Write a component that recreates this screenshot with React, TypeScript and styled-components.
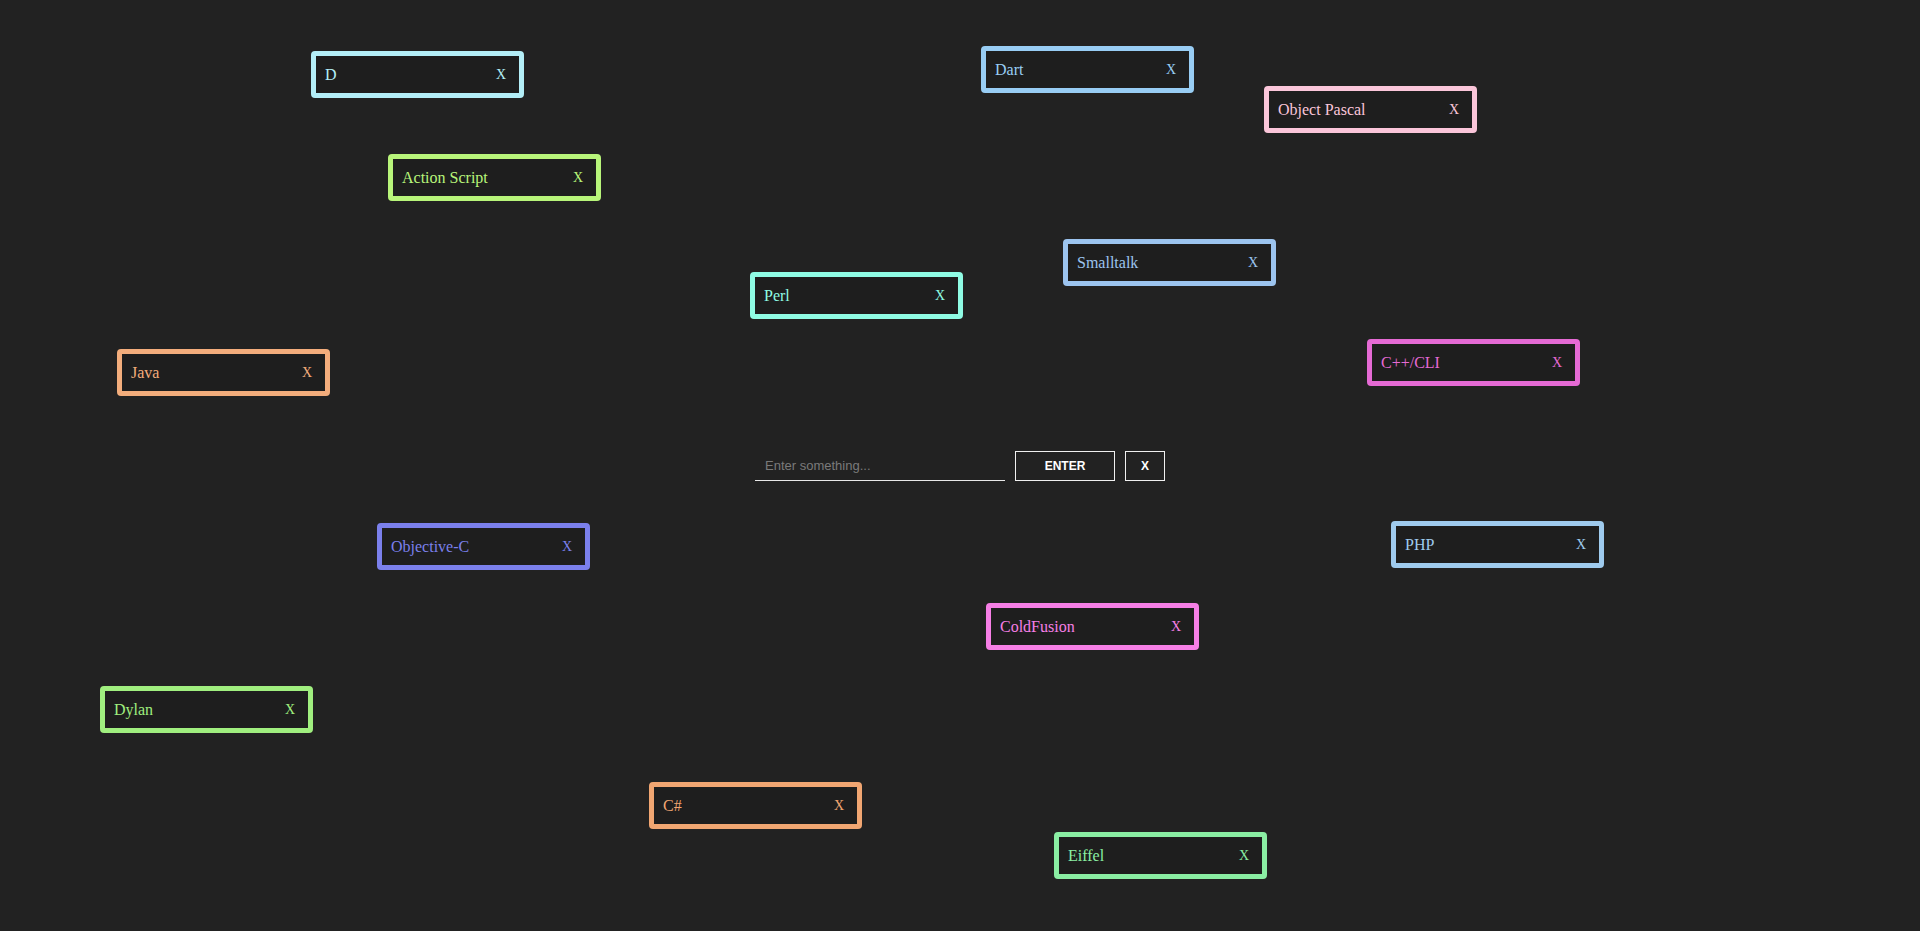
import React from "react";
import styled, { createGlobalStyle } from "styled-components";

const GlobalStyle = createGlobalStyle`
  html, body {
    margin: 0;
    padding: 0;
    background: #222222;
    overflow: hidden;
  }
  * { box-sizing: border-box; }
`;

const Canvas = styled.main`
  position: relative;
  width: 100vw;
  height: 100vh;
  background: #222222;
  display: flex;
  align-items: center;
  justify-content: center;
  font-family: "Liberation Serif", "Times New Roman", serif;
`;

const Form = styled.form`
  display: flex;
  align-items: stretch;
  gap: 10px;
  height: 30px;
  font-family: "Liberation Sans", Arial, sans-serif;
`;

const TextInput = styled.input`
  width: 250px;
  height: 30px;
  background: transparent;
  border: none;
  border-bottom: 1px solid #e8e8e8;
  padding: 0 10px;
  color: #ffffff;
  font-family: "Liberation Sans", Arial, sans-serif;
  font-size: 13px;
  outline: none;
  &::placeholder {
    color: #7a7a7a;
  }
`;

const FormButton = styled.button<{ $w: number }>`
  width: ${(p) => p.$w}px;
  height: 30px;
  background: transparent;
  border: 1px solid #f0f0f0;
  color: #ffffff;
  font-family: "Liberation Sans", Arial, sans-serif;
  font-size: 12px;
  font-weight: 700;
  padding: 0;
  cursor: pointer;
`;

const Card = styled.div<{ $c: string }>`
  position: absolute;
  width: 213px;
  height: 47px;
  border: 5px solid ${(p) => p.$c};
  border-radius: 4px;
  background: #1e1e1e;
  color: ${(p) => p.$c};
  display: flex;
  align-items: center;
  justify-content: space-between;
  padding: 0 13px 0 9px;
  font-size: 16px;
`;

const Label = styled.span`
  white-space: nowrap;
`;

const Remove = styled.button<{ $c: string }>`
  background: transparent;
  border: none;
  padding: 0;
  color: ${(p) => p.$c};
  font-family: "Liberation Serif", "Times New Roman", serif;
  font-size: 14px;
  cursor: pointer;
`;

type Item = { name: string; color: string; x: number; y: number };

const items: Item[] = [
  { name: "D", color: "#b3eef7", x: 311, y: 51 },
  { name: "Dart", color: "#98cdf4", x: 981, y: 46 },
  { name: "Object Pascal", color: "#fbc6da", x: 1264, y: 86 },
  { name: "Action Script", color: "#b8f57a", x: 388, y: 154 },
  { name: "Smalltalk", color: "#9cc4ef", x: 1063, y: 239 },
  { name: "Perl", color: "#8ffce4", x: 750, y: 272 },
  { name: "C++/CLI", color: "#e56ad4", x: 1367, y: 339 },
  { name: "Java", color: "#f3ad7c", x: 117, y: 349 },
  { name: "Objective-C", color: "#7b80ec", x: 377, y: 523 },
  { name: "PHP", color: "#9fcbee", x: 1391, y: 521 },
  { name: "ColdFusion", color: "#f67fe6", x: 986, y: 603 },
  { name: "Dylan", color: "#a0ef7f", x: 100, y: 686 },
  { name: "C#", color: "#f1a672", x: 649, y: 782 },
  { name: "Eiffel", color: "#8aeea3", x: 1054, y: 832 },
];

export default function App() {
  return (
    <>
      <GlobalStyle />
      <Canvas>
        {items.map((it) => (
          <Card key={it.name} $c={it.color} style={{ left: it.x, top: it.y }}>
            <Label>{it.name}</Label>
            <Remove type="button" $c={it.color}>X</Remove>
          </Card>
        ))}
        <Form onSubmit={(e) => e.preventDefault()}>
          <TextInput placeholder="Enter something..." />
          <FormButton type="submit" $w={100}>ENTER</FormButton>
          <FormButton type="button" $w={40}>X</FormButton>
        </Form>
      </Canvas>
    </>
  );
}
